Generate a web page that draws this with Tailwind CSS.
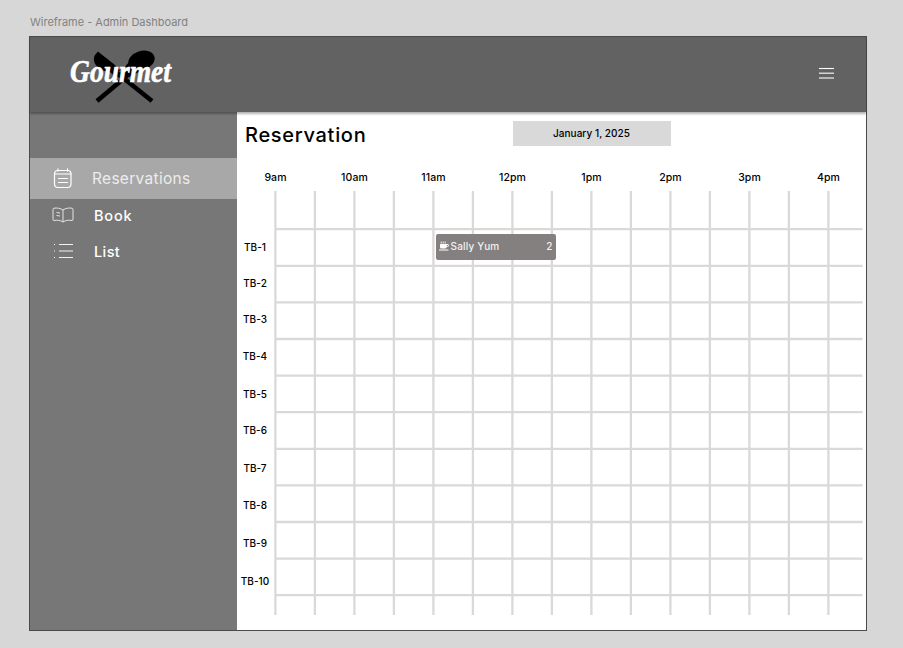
<!DOCTYPE html>
<html lang="en">
<head>
<meta charset="utf-8">
<title>Gourmet Admin Dashboard</title>
<script src="https://cdn.jsdelivr.net/npm/@tailwindcss/browser@4"></script>
</head>
<body class="h-[648px] w-[903px] overflow-hidden bg-[#d7d7d7] pl-[29px] font-['Inter',sans-serif] text-black">
<div class="flex h-9 items-center pl-[1px] pt-[9px] text-[11px] leading-none text-[#828282]"><span class="pb-[1px] tracking-[-0.020px]">Wireframe - Admin Dashboard</span></div>
<div class="flex h-[595px] w-[838px] flex-col border border-[#4a4a4a] bg-white">
  <header class="relative z-10 flex h-[75px] shrink-0 items-start justify-between bg-[#626262] shadow-[0_2px_2px_rgba(0,0,0,0.3)]">
    <svg class="ml-[34px] mt-[9px] overflow-visible" width="120" height="60" viewBox="0 0 120 60" aria-label="Gourmet">
      <path d="M34 5.500C43 13 51 18 56 24.500L51 30.500L46 26C34 25 27 16 31 9Z"/>
      <path d="M33 55L61 31.500M88 55L48 23" fill="none" stroke="#000" stroke-width="4.600"/>
      <ellipse cx="77.500" cy="14.500" rx="13.500" ry="9.500" transform="rotate(-18 77.500 14.500)"/>
      <path d="M65 16L80 23L58 35L53 30Z"/>
      <text x="6" y="36" textLength="101" lengthAdjust="spacingAndGlyphs" fill="#fff" stroke="#fff" stroke-width="0.600" stroke-linejoin="round" font-family="Liberation Serif, serif" font-style="italic" font-weight="700" font-size="32">Gourmet</text>
    </svg>
    <svg class="mr-[32px] mt-[30px]" width="15" height="12" viewBox="0 0 15 12"><path d="M0 1.500H15" stroke="#fff" stroke-width="1.100"/><path d="M0 6.200H15M0 11H15" stroke="#d4d4d4" stroke-width="1.400"/></svg>
  </header>
  <div class="flex min-h-0 flex-1">
    <nav class="w-[206.500px] shrink-0 bg-[#777] pt-[46px] text-white">
      <div class="flex h-[41px] items-center bg-[#a8a8a8] pl-[23px] text-[15.500px] text-[#ececec]">
        <svg width="20" height="22" viewBox="0 0 20 22" fill="none" stroke="#fff" stroke-width="1.200" stroke-linecap="round"><rect x="1.500" y="2.500" width="16.500" height="17" rx="3.500"/><path d="M1.500 6H18M5 .800V3M14.500 .800V3M5.500 10.500H14.500M5.500 14.500H14.500"/></svg>
        <span class="ml-[19px] pt-[1px] tracking-[0.300px]">Reservations</span>
      </div>
      <div class="flex h-[34px] items-center pl-[22px] text-[14.500px] font-medium">
        <svg class="mb-[2px]" width="22" height="16" viewBox="0 0 22 16" fill="none" stroke="#e4e4e4" stroke-width="1"><path d="M11 3C8 1 5 .800 2 1.200Q1 1.300 1 2.500V12.500Q1 13.500 2 13.500C5 13 8 13 11 15C14 13 17 13 20 13.500Q21 13.500 21 12.500V2.500Q21 1.300 20 1.200C17 .800 14 1 11 3V15M4.500 5.500L8 6M4.500 8.500L8 9"/></svg>
        <span class="ml-[20px] tracking-[0.800px]">Book</span>
      </div>
      <div class="flex h-[37px] items-center pl-[23px] text-[14.500px] font-medium">
        <svg class="mb-[1px]" width="21" height="16" viewBox="0 0 21 16" stroke="#f2f2f2" stroke-width="1.200"><path d="M6 1.500H20M6 8H20M6 14.500H20M1 1.500H2M1 8H2M1 14.500H2"/></svg>
        <span class="ml-[20px] pt-[1px] tracking-[0.400px]">List</span>
      </div>
    </nav>
    <main class="flex min-w-0 flex-1 flex-col">
      <div class="flex h-[45px] items-center">
        <h1 class="w-[276.500px] pl-[8.500px] text-[20px] font-medium"><span class="tracking-[0.700px]">Reservation</span></h1>
        <div class="mb-[3px] flex h-[25px] w-[158px] items-center justify-center bg-[#d9d9d9] text-[10px] font-medium"><span class="ml-[-1px] tracking-[0.050px]">January 1, 2025</span></div>
      </div>
      <div class="ml-[-0.500px] flex h-[34px] items-end pb-[8px] text-[10.500px] font-medium leading-none tracking-[0.100px]">
        <span class="w-[79px] shrink-0 text-center">9am</span><span class="w-[79px] shrink-0 text-center">10am</span><span class="w-[79px] shrink-0 text-center">11am</span><span class="w-[79px] shrink-0 text-center">12pm</span><span class="w-[79px] shrink-0 text-center">1pm</span><span class="w-[79px] shrink-0 text-center">2pm</span><span class="w-[79px] shrink-0 text-center">3pm</span><span class="w-[79px] shrink-0 text-center">4pm</span>
      </div>
      <div class="flex">
        <div class="flex w-[37px] shrink-0 flex-col pt-[38px] text-center text-[10px] font-medium">
          <span class="flex h-[37px] items-center justify-center">TB-1</span><span class="flex h-[35px] items-center justify-center">TB-2</span><span class="flex h-[36px] items-center justify-center">TB-3</span><span class="flex h-[39px] items-center justify-center">TB-4</span><span class="flex h-[36px] items-center justify-center">TB-5</span><span class="flex h-[36px] items-center justify-center">TB-6</span><span class="flex h-[40px] items-center justify-center">TB-7</span><span class="flex h-[35px] items-center justify-center">TB-8</span><span class="flex h-[40px] items-center justify-center">TB-9</span><span class="flex h-[37px] items-center justify-center">TB-10</span>
        </div>
        <div class="relative">
          <svg class="overflow-visible" width="589" height="424" viewBox="0 0 589 424" stroke="#d9d9d9" stroke-width="2.300" id="grid"></svg>
          <div class="absolute left-[162px] top-[43px] flex h-[26px] w-[120px] items-center rounded-[2px] bg-[#858080] px-[3px] pb-[2px] text-[10px] font-medium text-[#f2f2f2]">
            <svg width="10" height="10" viewBox="0 0 10 10" fill="#fff"><path fill-rule="evenodd" d="M1 3H9Q9.800 3.200 9.800 4.500T8.500 6H7.700Q7.400 7.500 6 7.500H2.500Q1 7.500 1 6ZM7.800 3.900V5.200H8.500Q9 5.200 9 4.500T8.500 3.900ZM0 8.500H9.500V9.500H0Z"/><path d="M2.200 .5V2.500M4.200 .5V2.500M6.200 .5V2.500" stroke="#fff" stroke-width=".9"/></svg>
            <span class="ml-[2px] tracking-[0.200px]">Sally Yum</span><span class="ml-auto">2</span>
          </div>
        </div>
      </div>
    </main>
  </div>
</div>
<script>
const grid = document.getElementById('grid');
let d = '';
for (let i = 0; i < 15; i++) d += `M${1.4 + i * 39.5} 0V424`;
for (let i = 0; i < 11; i++) d += `M1 ${38.2 + i * 36.6}H588.5`;
grid.innerHTML = `<path d="${d}"/>`;
</script>
</body>
</html>
